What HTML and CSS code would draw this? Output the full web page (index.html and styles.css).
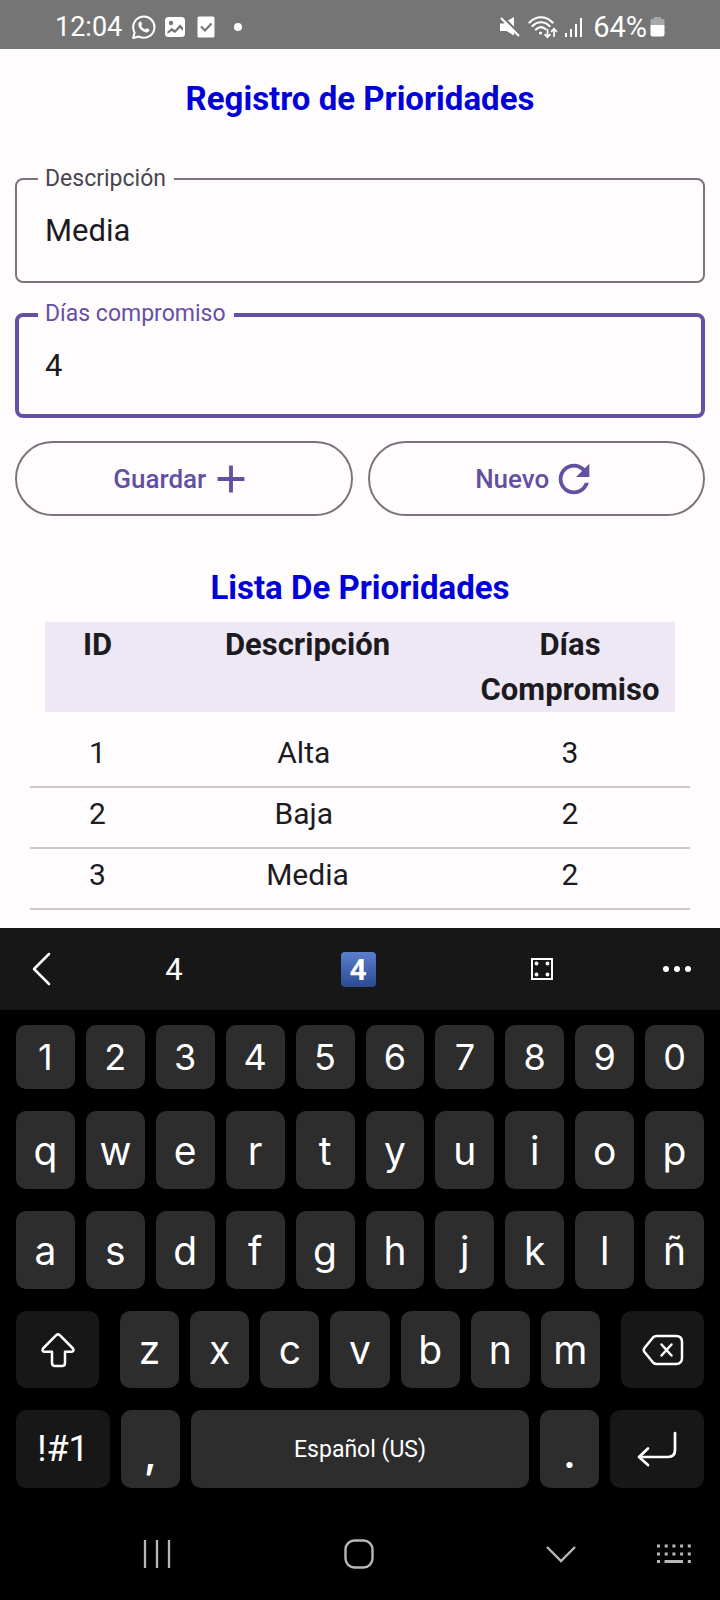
FILE: index.html
```html
<!DOCTYPE html>
<html lang="es">
<head>
<meta charset="utf-8">
<meta name="viewport" content="width=device-width, initial-scale=1">
<title>Registro de Prioridades</title>
<link rel="stylesheet" href="styles.css">
</head>
<body>
<header class="status">
  <div class="status-left">
    <span>12:04</span>
    <svg class="ic-chat" width="24" height="24" viewBox="0 0 24 24"><path d="M1.2 23 2.6 17.4A10.6 10.6 0 1 1 6.8 21.5Z" fill="none" stroke="#fff" stroke-width="2" stroke-linejoin="round"/><path d="M7 7.2C7.6 6.4 8.8 6.2 9.2 7l.9 2c.2.5-.7 1.3-.9 1.7.8 1.7 2.200 3 4 3.800.5-.3 1.200-1.400 1.700-1.200l2.100 1c.7.5.2 1.800-.5 2.400-1.200 1-2.800.8-4.500 0-2.400-1.100-4.200-3-5.100-5C6.300 10 6.200 8.300 7 7.200Z" fill="#fff"/></svg>
    <svg class="ic-image" width="22" height="22" viewBox="0 0 22 22"><rect x="1" y="1" width="20" height="20" rx="3.500" fill="#fff"/><circle cx="7" cy="7" r="2.200" fill="#757575"/><path d="M3.500 18v-2.500l4-3.500 3.500 2 5-5.500 3 3V15l-3-3-5 5-3.500-2Z" fill="#757575"/></svg>
    <svg class="ic-task" width="18" height="22" viewBox="0 0 18 22"><rect x="0.500" y="0.500" width="17" height="21" rx="1.500" fill="#fff"/><path d="m4 10.500 4 4 6.500-7" fill="none" stroke="#757575" stroke-width="2.200"/></svg>
    <svg class="ic-dot" width="10" height="10" viewBox="0 0 10 10"><circle cx="5" cy="5" r="4" fill="#fff"/></svg>
  </div>
  <div class="status-right">
    <svg width="22" height="22" viewBox="0 0 22 22"><path d="M1 7.500h4l2-1.500 8 8v5.500L7.500 15H1Z M9 4.500 15 1v9.500Z" fill="#fff"/><path d="m2 2 18 18" stroke="#fff" stroke-width="2"/></svg>
    <svg class="ic-wifi" width="30" height="24" viewBox="0 0 30 24"><g fill="none" stroke="#fff" stroke-width="2.200" stroke-linecap="round"><path d="M1.500 7.500C8 .5 18 .5 24.500 7.500M4.500 11c5-5 12-5 17 0M8 14.500c3-3 6.500-3 9.500-.5"/></g><circle cx="12.500" cy="18" r="1.600" fill="#fff"/><path d="M19.500 14v8m-3-2.800 3 3 3-3M26 22v-8m-3 2.800 3-3 3 3" fill="none" stroke="#fff" stroke-width="1.700"/></svg>
    <svg class="ic-signal" width="19" height="22" viewBox="0 0 19 22"><path d="M2 17v4M7 13v8M12 8v13M17 2v19" stroke="#fff" stroke-width="2"/></svg>
    <span class="percent">64%</span>
    <svg class="ic-battery" width="15" height="22" viewBox="0 0 15 22"><path d="M4 1h7v2h2q1.500 0 1.500 1.500V9H.5V4.500Q.5 3 2 3h2Z" fill="#a8a8a8"/><path d="M.5 9h14v9q0 2.500-2.500 2.500H3Q.5 20.500.5 18Z" fill="#fff"/></svg>
  </div>
</header>

<main class="app">
  <h1 class="title">Registro de Prioridades</h1>
  <form class="form">
    <div class="field">
      <label for="descripcion">Descripción</label>
      <input id="descripcion" type="text" value="Media">
    </div>
    <div class="field field-active">
      <label for="dias">Días compromiso</label>
      <input id="dias" type="text" inputmode="numeric" value="4">
    </div>
    <div class="actions">
      <button type="button" class="action">Guardar
        <svg width="46" height="46" viewBox="0 0 24 24"><path d="M19 13h-6v6h-2v-6H5v-2h6V5h2v6h6z" fill="currentColor"/></svg>
      </button>
      <button type="button" class="action">Nuevo
        <svg width="46" height="46" viewBox="0 0 24 24"><path d="M17.650 6.350C16.200 4.900 14.210 4 12 4c-4.420 0-7.990 3.580-7.990 8s3.570 8 7.990 8c3.730 0 6.840-2.550 7.730-6h-2.080c-.82 2.330-3.040 4-5.650 4-3.310 0-6-2.690-6-6s2.690-6 6-6c1.660 0 3.140.69 4.220 1.780L13 11h7V4l-2.350 2.350z" fill="currentColor"/></svg>
      </button>
    </div>
  </form>
  <h2 class="title">Lista De Prioridades</h2>
  <table class="list">
    <thead>
      <tr><th scope="col">ID</th><th scope="col">Descripción</th><th scope="col">Días Compromiso</th></tr>
    </thead>
    <tbody>
      <tr><td>1</td><td>Alta&nbsp;</td><td>3</td></tr>
      <tr><td>2</td><td>Baja&nbsp;</td><td>2</td></tr>
      <tr><td>3</td><td>Media</td><td>2</td></tr>
    </tbody>
  </table>
</main>

<section class="keyboard" aria-label="Teclado">
  <div class="suggest">
    <button type="button" aria-label="Atrás"><svg width="22" height="36" viewBox="0 0 22 36"><path d="M19 3 4 18l15 15" fill="none" stroke="#fff" stroke-width="2.500" stroke-linecap="round" stroke-linejoin="round"/></svg></button>
    <button type="button">4</button>
    <button type="button"><span class="emoji">4</span></button>
    <button type="button" aria-label="Dado"><svg width="24" height="24" viewBox="0 0 24 24"><rect x="2" y="2" width="20" height="20" fill="none" stroke="#fff" stroke-width="2"/><g fill="#fff"><circle cx="6.500" cy="6.500" r="1.900"/><circle cx="17.500" cy="6.500" r="1.900"/><circle cx="6.500" cy="17.500" r="1.900"/><circle cx="17.500" cy="17.500" r="1.900"/></g></svg></button>
    <button type="button" aria-label="Más"><svg width="30" height="8" viewBox="0 0 30 8"><g fill="#fff"><circle cx="4" cy="4" r="3"/><circle cx="15" cy="4" r="3"/><circle cx="26" cy="4" r="3"/></g></svg></button>
  </div>
  <div class="keys">
    <div class="row digits"><button type="button">1</button><button type="button">2</button><button type="button">3</button><button type="button">4</button><button type="button">5</button><button type="button">6</button><button type="button">7</button><button type="button">8</button><button type="button">9</button><button type="button">0</button></div>
    <div class="row"><button type="button">q</button><button type="button">w</button><button type="button">e</button><button type="button">r</button><button type="button">t</button><button type="button">y</button><button type="button">u</button><button type="button">i</button><button type="button">o</button><button type="button">p</button></div>
    <div class="row"><button type="button">a</button><button type="button">s</button><button type="button">d</button><button type="button">f</button><button type="button">g</button><button type="button">h</button><button type="button">j</button><button type="button">k</button><button type="button">l</button><button type="button">ñ</button></div>
    <div class="row row-shift">
      <button type="button" class="dark" aria-label="Mayúsculas"><svg width="36" height="36" viewBox="0 0 36 36"><path d="M16.200 3.200q1.800-1.600 3.600 0L33 16.500q1.500 3-1.500 3.300H25V31q0 3-3 3h-7q-3 0-3-3V19.800H4.500q-3-.3-1.500-3.300Z" fill="none" stroke="#fff" stroke-width="2.500" stroke-linejoin="round"/></svg></button>
      <div class="row letters"><button type="button">z</button><button type="button">x</button><button type="button">c</button><button type="button">v</button><button type="button">b</button><button type="button">n</button><button type="button">m</button></div>
      <button type="button" class="dark" aria-label="Borrar"><svg width="42" height="32" viewBox="0 0 42 32"><path d="M14.500 2H34q6 0 6 6v16q0 6-6 6H14.500q-2 0-3.500-1.500L2.500 18q-1.500-2 0-4L11 3.500Q12.500 2 14.500 2Z" fill="none" stroke="#fff" stroke-width="2.500"/><path d="m19.500 10.500 10 11m0-11-10 11" stroke="#fff" stroke-width="2.500" stroke-linecap="round"/></svg></button>
    </div>
    <div class="row row-space">
      <button type="button" class="dark symbols">!#1</button>
      <button type="button" class="punct">,</button>
      <button type="button" class="space">Español (US)</button>
      <button type="button" class="punct">.</button>
      <button type="button" class="dark" aria-label="Intro"><svg width="42" height="36" viewBox="0 0 42 36"><path d="M39 2v17q0 7-7 7H3m9-8.500L3 26l9 8" fill="none" stroke="#fff" stroke-width="2.700" stroke-linecap="round" stroke-linejoin="round"/></svg></button>
    </div>
  </div>
  <nav class="nav" aria-label="Sistema">
    <button type="button" aria-label="Recientes"><svg width="30" height="32" viewBox="0 0 30 32"><path d="M3 2v28M15 2v28M27 2v28" stroke="#b8b8b8" stroke-width="2.300"/></svg></button>
    <button type="button" aria-label="Inicio"><svg width="30" height="30" viewBox="0 0 30 30"><rect x="1.500" y="1.500" width="27" height="27" rx="9" fill="none" stroke="#b8b8b8" stroke-width="2.400"/></svg></button>
    <button type="button" aria-label="Ocultar teclado"><svg width="32" height="20" viewBox="0 0 32 20"><path d="m2 3 14 14L30 3" fill="none" stroke="#b8b8b8" stroke-width="2.400"/></svg></button>
    <button type="button" aria-label="Cambiar teclado"><svg width="36" height="20" viewBox="0 0 36 20"><g stroke="#b8b8b8" stroke-width="3.200"><path d="M1 2h34M1 10h34" stroke-dasharray="3 4.700"/><path d="M1 17.500h3M8.500 17.500h18.500M31.800 17.500h3"/></g></svg></button>
  </nav>
</section>
</body>
</html>
```
FILE: styles.css
```css
* {
  box-sizing: border-box;
}

body {
  margin: 0;
  background: #fffcfe;
  color: #1c1b1f;
  font-family: Roboto, "Liberation Sans", sans-serif;
}

button {
  display: flex;
  align-items: center;
  justify-content: center;
  margin: 0;
  padding: 0;
  border: 0;
  background: none;
  color: inherit;
  font: inherit;
}

svg {
  display: block;
  flex: none;
}

/* Status bar */
.status {
  display: flex;
  justify-content: space-between;
  height: 49px;
  padding: 4px 55px 0 55px;
  background: #757575;
  color: #fff;
  font-size: 27px;
}

.status-left,
.status-right {
  display: flex;
  align-items: center;
}

.percent {
  font-size: 29px;
}

.ic-chat {
  margin-left: 10px;
}

.ic-image {
  margin-left: 8px;
}

.ic-task {
  margin-left: 11px;
}

.ic-dot {
  margin-left: 18px;
}

.ic-wifi {
  margin-left: 7px;
}

.ic-signal {
  margin: 0 10px 0 6px;
}

.ic-battery {
  margin-left: 3px;
}

/* Priority form */
.app {
  padding: 26px 15px 18px;
}

.title {
  margin: 0;
  color: #0000d8;
  font-size: 33px;
  font-weight: 700;
  line-height: 48px;
  text-align: center;
}

.form {
  display: flex;
  flex-direction: column;
  gap: 30px;
  margin: 55px 0 48px;
}

.field {
  position: relative;
}

.field label {
  position: absolute;
  top: -13px;
  left: 23px;
  padding: 0 8px 0 7px;
  background: #fffcfe;
  color: #49454f;
  font-size: 23px;
  line-height: 28px;
}

.field input {
  display: block;
  width: 100%;
  height: 105px;
  padding: 0 28px;
  border: 2px solid #79747e;
  border-radius: 8px;
  outline: 0;
  background: none;
  color: inherit;
  font: inherit;
  font-size: 31px;
}

.field-active label {
  color: #6750a4;
}

.field-active input {
  padding: 0 26px;
  border: 4px solid #6250a0;
}

.actions {
  display: grid;
  grid-template-columns: 1fr 1fr;
  gap: 15px;
  margin-top: -7px;
}

.action {
  gap: 2px;
  height: 75px;
  border: 2px solid #79747e;
  border-radius: 38px;
  color: #6250a0;
  font-size: 26px;
  font-weight: 500;
}

/* Priority table */
.list {
  display: block;
  margin: 10px 15px 0;
  font-size: 30px;
  line-height: 45px;
}

.list thead,
.list tbody {
  display: block;
}

.list tr {
  display: grid;
  grid-template-columns: 1fr 3fr 2fr;
}

.list thead tr {
  margin: 0 15px 15px;
  background: #eee8f4;
  font-size: 31px;
}

.list tbody tr {
  padding: 3px 15px 11px;
  border-bottom: 2px solid #cac8cc;
}

.list th,
.list td {
  padding: 0;
  text-align: center;
}

/* On-screen keyboard */
.keyboard {
  background: #000;
  color: #fff;
}

.suggest {
  display: grid;
  grid-template-columns: 82px 1fr 1fr 1fr 86px;
  height: 82px;
  background: #171717;
  font-size: 31px;
}

.emoji {
  width: 35px;
  border-radius: 4px;
  background: linear-gradient(#5b7fd0, #2c4a90);
  font-size: 30px;
  font-weight: 700;
  line-height: 35px;
}

.keys {
  display: flex;
  flex-direction: column;
  gap: 22px;
  padding: 15px 16px 0;
  font-family: Inter, Roboto, sans-serif;
  font-size: 39px;
}

.row {
  display: grid;
  grid-template-columns: repeat(10, 1fr);
  gap: 11px;
}

.row button {
  height: 78px;
  border-radius: 10px;
  background: #2d2d2e;
}

.row.digits button {
  height: 64px;
  font-size: 36px;
}

.row .dark {
  background: #171718;
}

.row-shift {
  grid-template-columns: 83fr 480fr 83fr;
  gap: 21px;
}

.row-shift button {
  height: 77px;
}

.letters {
  grid-template-columns: repeat(7, 1fr);
  gap: 11px;
}

.row-space {
  grid-template-columns: 94fr 59fr 338fr 59fr 94fr;
}

.row .symbols {
  font-family: Roboto, sans-serif;
  font-size: 36px;
}

.row .punct {
  padding-top: 8px;
  font-weight: 600;
}

.row .space {
  font-family: Roboto, sans-serif;
  font-size: 23px;
}

.nav {
  display: grid;
  grid-template-columns: 202fr 202fr 202fr minmax(0, 24fr);
  align-items: center;
  height: 112px;
  padding: 20px 34px 0 56px;
}
```
